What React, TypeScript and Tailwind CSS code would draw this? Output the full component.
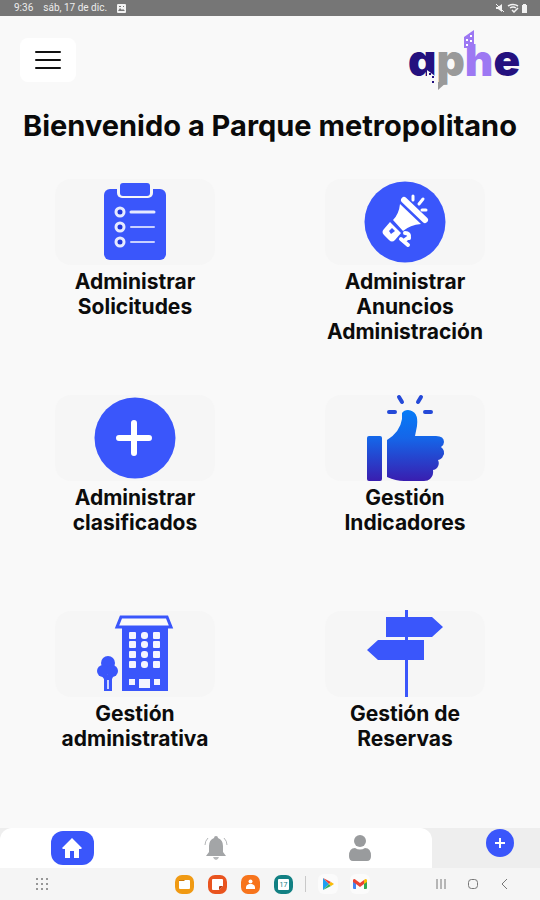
import type { ReactNode } from "react";

const BLUE = "#3a56fb";

function Logo() {
  return (
    <svg width="112" height="62" viewBox="409 29 112 62" role="img" aria-label="aphe">
      <text
        x="409"
        y="76"
        fontFamily="Inter, sans-serif"
        fontWeight="900"
        fontSize="44"
        style={{ fontFeatureSettings: '"cv11"' }}
      >
        <tspan fill="#24117f">a</tspan>
        <tspan fill="#9a9a9a">p</tspan>
        <tspan fill="#9d78f3">h</tspan>
        <tspan fill="#24117f">e</tspan>
      </text>
      <path d="M465 37l10-7v18h-10z" fill="#9d78f3" />
      <path d="M467 39h2v2h-2zM471 35h2v2h-2zM471 40h2v2h-2zM467 44h2v2h-2z" fill="#fff" />
      <path d="M428 70l8 6v9l-8-7z" fill="#f9f9f9" />
      <path d="M430 73h2v2h-2zM433 76h2v2h-2zM433 81h2v2h-2z" fill="#24117f" />
      <path d="M439 82h9l-9 8z" fill="#9a9a9a" />
    </svg>
  );
}

function ClipboardIcon() {
  return (
    <svg width="86" height="86" viewBox="0 0 86 86" aria-hidden="true">
      <rect x="12" y="10" width="62" height="71" rx="6" fill={BLUE} />
      <path d="M25 9h36v5a5 5 0 0 1-5 5H30a5 5 0 0 1-5-5z" fill="#f6f6f8" />
      <rect x="28" y="4" width="30" height="13" rx="3" fill={BLUE} />
      <g stroke="#e6eaff" strokeWidth="3" fill="#2036d8">
        <circle cx="28" cy="33" r="4" />
        <circle cx="28" cy="48" r="4" />
        <circle cx="28" cy="63" r="4" />
      </g>
      <path d="M39 33h23" stroke="#e6eaff" strokeWidth="3" strokeLinecap="round" />
      <path d="M39 48h23M39 63h23" stroke="#c8d0ff" strokeWidth="2" strokeLinecap="round" />
    </svg>
  );
}

function MegaphoneIcon() {
  return (
    <svg width="86" height="86" viewBox="0 0 86 86" aria-hidden="true">
      <circle cx="43" cy="43" r="40.500" fill={BLUE} />
      <path d="M42 21l21 20" stroke="#fff" strokeWidth="6" strokeLinecap="round" />
      <path d="M38 25l21 20q-11 1-18 7L31 41q6-6 7-16z" fill="#fff" />
      <path d="M28 43l11 11-6 7q-3 3-6 0l-5-5q-3-3 0-6z" fill="#fff" />
      <path d="M30 49l3 3-4 3-2-3z" fill={BLUE} />
      <path d="M39 60l7 6M43 61l4-3M43 54q5 0 4 5" stroke="#fff" strokeWidth="4" strokeLinecap="round" fill="none" />
      <path d="M51 21v-4M57 25l4-5M60 31h4" stroke="#fff" strokeWidth="3" strokeLinecap="round" />
    </svg>
  );
}

function PlusIcon() {
  return (
    <svg width="86" height="86" viewBox="0 0 86 86" aria-hidden="true">
      <circle cx="43" cy="43" r="40.500" fill={BLUE} />
      <path d="M42 28v30M27 43h30" stroke="#fff" strokeWidth="6" strokeLinecap="round" />
    </svg>
  );
}

function ThumbIcon() {
  return (
    <svg width="86" height="88" viewBox="0 0 86 88" aria-hidden="true">
      <defs>
        <linearGradient id="thumb" gradientUnits="userSpaceOnUse" x1="0" y1="15" x2="0" y2="88">
          <stop offset="0" stopColor="#057cf8" />
          <stop offset="0.400" stopColor="#1565e8" />
          <stop offset="1" stopColor="#3a1cae" />
        </linearGradient>
      </defs>
      <rect x="5" y="42" width="15" height="45" rx="2" fill="url(#thumb)" />
      <path
        d="M25 46Q38 38 40 25V19Q42 16 46 16Q57 17 55 32L53 42H74Q82 42 82 48Q82 51 79 53Q84 57 81 62Q80 65 76 66Q78 70 75 74Q73 76 71 76Q72 81 68 85Q66 87 62 87H42Q34 87 25 83z"
        fill="url(#thumb)"
      />
      <path d="M27 18h6M63 18h6M37 3l3 5M59 3l-3 5" stroke="#2449d8" strokeWidth="4" strokeLinecap="round" />
    </svg>
  );
}

function BuildingIcon() {
  const columns = [37, 49, 61];
  const rows = [21, 30, 40, 50];
  return (
    <svg width="86" height="86" viewBox="0 0 86 86" aria-hidden="true">
      <path d="M30 16h46v64H30z" fill={BLUE} />
      <path d="M29 6h46l4 10H25z" fill="#fafafa" stroke={BLUE} strokeWidth="3" />
      {rows.map((y) =>
        columns.map((x) => (
          <rect key={`${x}-${y}`} x={x} y={y} width="7" height="7" rx={x === 49 ? 3 : 1} fill="#f4f5ff" />
        )),
      )}
      <path d="M37 68h6v6h-6zM62 68h6v6h-6zM47 68h11v9H47z" fill="#f4f5ff" />
      <g fill={BLUE}>
        <circle cx="16" cy="52" r="7" />
        <circle cx="11" cy="60" r="6" />
        <circle cx="20" cy="60" r="6" />
        <path d="M9 64h13l-2 4v12h-8V68z" />
      </g>
      <path d="M16 69v9" stroke="#cdd5ff" strokeWidth="2" />
    </svg>
  );
}

function SignpostIcon() {
  return (
    <svg width="86" height="88" viewBox="0 0 86 88" aria-hidden="true">
      <path d="M43 0h3v87h-3z" fill={BLUE} />
      <path d="M24 7h46l11 10-11 10H24zM16 30h46v20H16L5 40z" fill={BLUE} />
    </svg>
  );
}

function BellIcon() {
  return (
    <svg width="24" height="26" viewBox="0 0 24 26" aria-hidden="true">
      <path d="M12 1a2 2 0 0 1 2 2q5 2 5 8v6l3 4H2l3-4v-6q0-6 5-8a2 2 0 0 1 2-2z" fill="#a3a5a7" />
      <path d="M9 22h6q-1 3-3 3t-3-3z" fill="#b8babc" />
      <path d="M4 3Q1 6 1 10M20 3q3 3 3 7" stroke="#b5b7b9" fill="none" />
    </svg>
  );
}

function Tile({ lines, icon }: { lines: string[]; icon: ReactNode }) {
  return (
    <button type="button" className="flex flex-col items-center self-start">
      <span className="flex h-[86px] w-40 items-center justify-center rounded-2xl bg-[#f6f6f6]">{icon}</span>
      <span className="mt-1 text-center text-[21px] leading-[25px] font-bold text-[#0c0c0c]">
        {lines.map((line) => (
          <span key={line} className="block">
            {line}
          </span>
        ))}
      </span>
    </button>
  );
}

const tiles: { lines: string[]; icon: ReactNode }[] = [
  { lines: ["Administrar", "Solicitudes"], icon: <ClipboardIcon /> },
  { lines: ["Administrar", "Anuncios", "Administración"], icon: <MegaphoneIcon /> },
  { lines: ["Administrar", "clasificados"], icon: <PlusIcon /> },
  { lines: ["Gestión", "Indicadores"], icon: <ThumbIcon /> },
  { lines: ["Gestión", "administrativa"], icon: <BuildingIcon /> },
  { lines: ["Gestión de", "Reservas"], icon: <SignpostIcon /> },
];

function StatusBar() {
  return (
    <div className="flex h-4 items-center bg-[#767676] pr-3 pl-3.5 font-[Roboto,sans-serif] text-[10px] leading-4 text-[#ececec]">
      <span>9:36</span>
      <span className="ml-2.5">sáb, 17 de dic.</span>
      <svg className="ml-2.5" width="9" height="9" viewBox="0 0 9 9" aria-hidden="true">
        <rect width="9" height="9" rx="1" fill="#f2f2f2" />
        <path d="M1 7l2-3 2 2 1-1 2 2zM2 2h2v1H2zM6 2h1v1H6z" fill="#767676" />
      </svg>
      <svg className="ml-auto" width="32" height="10" viewBox="0 0 32 10" fill="none" stroke="#f2f2f2" aria-hidden="true">
        <path d="M0 4h2l4-3v8L2 6H0z" fill="#f2f2f2" stroke="none" />
        <path d="M0 1l8 8" />
        <path d="M12 3q5-3 10 0M14 5q3-2 6 0M16 7l2 2 4-4" strokeWidth="1.500" />
        <path d="M26 2h1V1h3v1h1v8h-5z" fill="#f2f2f2" stroke="none" />
      </svg>
    </div>
  );
}

function SystemBar() {
  return (
    <div className="flex h-8 items-center bg-[#f5f5f5] pr-[30px] pl-9">
      <button type="button" aria-label="Aplicaciones">
        <svg width="12" height="12" viewBox="0 0 12 12" fill="#777">
          {[0, 5, 10].map((y) => [0, 5, 10].map((x) => <rect key={`${x}-${y}`} x={x} y={y} width="2" height="2" rx="1" />))}
        </svg>
      </button>
      <div className="ml-auto flex items-center gap-3.5">
        <button type="button" aria-label="Archivos">
          <svg width="19" height="19" viewBox="0 0 19 19">
            <rect width="19" height="19" rx="7" fill="#f09a13" />
            <path d="M4 6q0-1 1-1h9q1 0 1 1v7q0 1-1 1H5q-1 0-1-1z" fill="#fff" />
            <path d="M4 5h5l1 1H4z" fill="#c9780a" />
          </svg>
        </button>
        <button type="button" aria-label="Notas">
          <svg width="19" height="19" viewBox="0 0 19 19">
            <rect width="19" height="19" rx="7" fill="#e9541f" />
            <path d="M5 4h9q1 0 1 1v6l-4 4H5q-1 0-1-1V5q0-1 1-1z" fill="#fff" />
            <path d="M15 11h-3q-1 0-1 1v3z" fill="#b63b12" />
          </svg>
        </button>
        <button type="button" aria-label="Contactos">
          <svg width="19" height="19" viewBox="0 0 19 19">
            <rect width="19" height="19" rx="7" fill="#f7741c" />
            <circle cx="9.500" cy="6.500" r="2" fill="#fff" />
            <path d="M5 14v-2q0-2 3-3h3q3 1 3 3v2z" fill="#fff" />
          </svg>
        </button>
        <button type="button" aria-label="Calendario">
          <svg width="19" height="19" viewBox="0 0 19 19">
            <rect width="19" height="19" rx="7" fill="#128083" />
            <rect x="4" y="4" width="11" height="11" rx="1" fill="#fff" />
            <text x="9.500" y="12" textAnchor="middle" fontFamily="Roboto, sans-serif" fontSize="7" fill="#128083">17</text>
          </svg>
        </button>
      </div>
      <span className="mx-3 h-4 w-px bg-[#c9c9c9]" />
      <div className="mr-[66px] flex items-center gap-3">
        <button type="button" aria-label="Play Store" className="flex size-5 items-center justify-center rounded-md bg-[#fbfbfb]">
          <svg width="12" height="12" viewBox="0 0 12 12">
            <path d="M1 0v12l6-6z" fill="#1fa0f0" />
            <path d="M1 0l8 4-2 2z" fill="#ee4035" />
            <path d="M1 12l8-4-2-2z" fill="#35b05a" />
            <path d="M9 4l3 2-3 2-2-2z" fill="#fbbc05" />
          </svg>
        </button>
        <button type="button" aria-label="Gmail" className="flex size-5 items-center justify-center rounded-md bg-[#fbfbfb]">
          <svg width="14" height="10" viewBox="0 0 14 10">
            <path d="M0 2l3 2v6H1q-1 0-1-1z" fill="#4285f4" />
            <path d="M14 2l-3 2v6h2q1 0 1-1z" fill="#34a853" />
            <path d="M0 3V1q1-2 3 0l4 3 4-3v4L7 8 3 5z" fill="#ea4335" />
            <path d="M11 1q2-2 3 0v2l-3 2z" fill="#fbbc05" />
          </svg>
        </button>
      </div>
      <div className="flex items-center gap-[22px] text-[#777]">
        <button type="button" aria-label="Recientes">
          <svg width="10" height="12" viewBox="0 0 10 12" stroke="currentColor">
            <path d="M1 1v10M5 1v10M9 1v10" />
          </svg>
        </button>
        <button type="button" aria-label="Inicio del sistema">
          <svg width="10" height="12" viewBox="0 0 10 12" fill="none" stroke="currentColor">
            <rect x="0.500" y="1.500" width="9" height="9" rx="3" />
          </svg>
        </button>
        <button type="button" aria-label="Atrás">
          <svg width="10" height="12" viewBox="0 0 10 12" fill="none" stroke="currentColor">
            <path d="M7 1L2 6l5 5" />
          </svg>
        </button>
      </div>
    </div>
  );
}

export default function App() {
  return (
    <div className="flex min-h-screen flex-col bg-[#f9f9f9] font-[Inter,sans-serif]">
      <StatusBar />
      <header className="flex h-[88px] items-center justify-between px-5">
        <button
          type="button"
          aria-label="Menú"
          className="flex h-11 w-14 flex-col items-center justify-center gap-1.5 rounded-lg bg-white"
        >
          <span className="h-0.5 w-[26px] rounded-full bg-[#111]" />
          <span className="h-0.5 w-[26px] rounded-full bg-[#111]" />
          <span className="h-0.5 w-[26px] rounded-full bg-[#111]" />
        </button>
        <Logo />
      </header>
      <main className="flex-1">
        <h1 className="text-center text-[29px] leading-11 font-bold whitespace-nowrap text-[#0a0a0a]">
          Bienvenido a Parque metropolitano
        </h1>
        <div className="mt-[31px] grid auto-rows-[216px] grid-cols-2 justify-items-center">
          {tiles.map((tile) => (
            <Tile key={tile.lines.join(" ")} {...tile} />
          ))}
        </div>
      </main>
      <nav className="flex h-10 bg-[#eeeeee]">
        <div className="grid w-4/5 grid-cols-3 items-center justify-items-center rounded-t-xl bg-white">
          <button type="button" aria-label="Inicio" className="flex h-[34px] w-[43px] items-center justify-center rounded-xl bg-[#3a56fb]">
            <svg width="22" height="22" viewBox="0 0 22 22" fill="#fff">
              <path d="M11 1L1 11l1 1h2v9h5v-7h4v7h5v-9h2l1-1z" />
            </svg>
          </button>
          <button type="button" aria-label="Notificaciones">
            <BellIcon />
          </button>
          <button type="button" aria-label="Perfil">
            <svg width="24" height="28" viewBox="0 0 24 28" fill="#999b9d">
              <circle cx="12" cy="7" r="6" />
              <path d="M1 22q0-8 6-8 5 3 10 0 6 0 6 8 0 5-4 5H5q-4 0-4-5z" />
            </svg>
          </button>
        </div>
        <div className="flex flex-1 items-start justify-center pl-7">
          <button type="button" aria-label="Agregar" className="mt-px flex size-7 items-center justify-center rounded-full bg-[#3a56fb]">
            <svg width="10" height="10" viewBox="0 0 10 10" stroke="#fff" strokeWidth="2">
              <path d="M5 0v10M0 5h10" />
            </svg>
          </button>
        </div>
      </nav>
      <SystemBar />
    </div>
  );
}
